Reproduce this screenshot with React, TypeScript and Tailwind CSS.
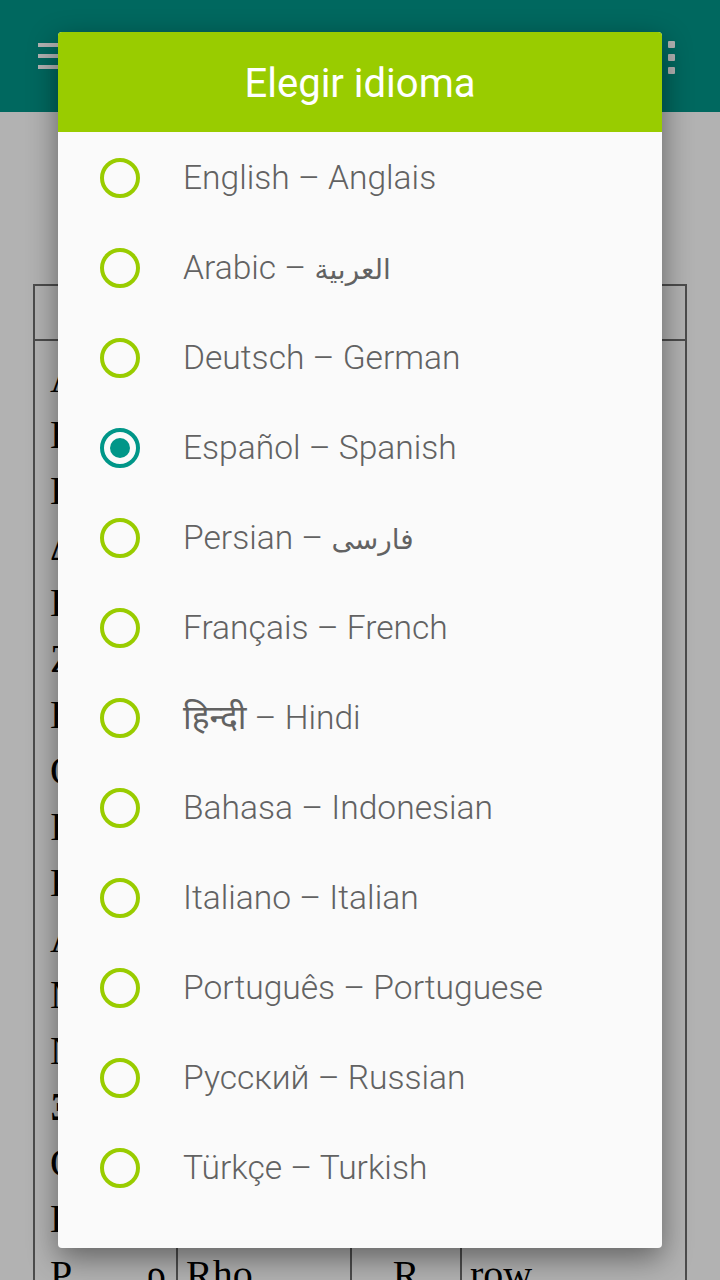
import React from "react";

type Lang = { pre: string; script?: string; post?: string; small?: boolean };

const languages: Lang[] = [
  { pre: "English – Anglais" },
  { pre: "Arabic – ", script: "العربية", small: true },
  { pre: "Deutsch – German" },
  { pre: "Español – Spanish" },
  { pre: "Persian – ", script: "فارسی", small: true },
  { pre: "Français – French" },
  { pre: "", script: "हिन्दी", post: " – Hindi" },
  { pre: "Bahasa – Indonesian" },
  { pre: "Italiano – Italian" },
  { pre: "Português – Portuguese" },
  { pre: "Русский – Russian" },
  { pre: "Türkçe – Turkish" },
];

const greek: [string, string, string, string, string][] = [
  ["Α", "α", "Alpha", "A", "al-fa"],
  ["Β", "β", "Beta", "B", "vee-ta"],
  ["Γ", "γ", "Gamma", "G", "gam-ma"],
  ["Δ", "δ", "Delta", "D", "del-ta"],
  ["Ε", "ε", "Epsilon", "E", "ep-si-lon"],
  ["Ζ", "ζ", "Zeta", "Z", "zee-ta"],
  ["Η", "η", "Eta", "H", "ee-ta"],
  ["Θ", "θ", "Theta", "Th", "thee-ta"],
  ["Ι", "ι", "Iota", "I", "yo-ta"],
  ["Κ", "κ", "Kappa", "K", "kap-pa"],
  ["Λ", "λ", "Lambda", "L", "lam-da"],
  ["Μ", "μ", "Mu", "M", "mee"],
  ["Ν", "ν", "Nu", "N", "nee"],
  ["Ξ", "ξ", "Xi", "X", "ksee"],
  ["Ο", "ο", "Omicron", "O", "o-mi-kron"],
  ["Π", "π", "Pi", "P", "pee"],
  ["Ρ", "ρ", "Rho", "R", "row"],
];

export default function App() {
  const selected = 3;
  return (
    <div
      className="relative w-[720px] h-[1280px] overflow-hidden bg-white"
      style={{ fontFamily: "Roboto, 'DejaVu Sans', 'Noto Sans', sans-serif" }}
    >
      {/* App bar */}
      <div className="h-[112px] bg-[#009688] flex items-start justify-between">
        <div className="ml-[38px] mt-[43px] flex flex-col gap-[7px]">
          <div className="w-[36px] h-[4px] bg-white" />
          <div className="w-[36px] h-[4px] bg-white" />
          <div className="w-[36px] h-[4px] bg-white" />
        </div>
        <div className="mr-[45px] mt-[41px] flex flex-col gap-[6px]">
          <div className="w-[7px] h-[7px] bg-white rounded-[1px]" />
          <div className="w-[7px] h-[7px] bg-white rounded-[1px]" />
          <div className="w-[7px] h-[7px] bg-white rounded-[1px]" />
        </div>
      </div>

      {/* Page content: table */}
      <div className="pt-[172px] px-[33px]">
        <div
          className="border-[2px] border-[#6e6e6e] w-[654px] text-black text-[40px]"
          style={{ fontFamily: "'Liberation Serif', 'DejaVu Serif', serif" }}
        >
          <div className="h-[55px] border-b-[2px] border-[#6e6e6e] flex">
            <div className="w-[143px] border-r-[2px] border-[#6e6e6e]" />
            <div className="w-[174px] border-r-[2px] border-[#6e6e6e]" />
            <div className="w-[110px] border-r-[2px] border-[#6e6e6e]" />
            <div className="flex-1" />
          </div>
          {greek.map((r, i) => (
            <div key={i} className="h-[56px] flex leading-[56px] whitespace-nowrap">
              <div className="w-[143px] border-r-[2px] border-[#6e6e6e] flex justify-between pl-[15px] pr-[10px] pt-[10px]">
                <span>{r[0]}</span>
                <span>{r[1]}</span>
              </div>
              <div className="w-[174px] border-r-[2px] border-[#6e6e6e] pl-[8px] pt-[10px]">{r[2]}</div>
              <div className="w-[110px] border-r-[2px] border-[#6e6e6e] text-center pt-[10px]">{r[3]}</div>
              <div className="flex-1 pl-[8px] pt-[10px]">{r[4]}</div>
            </div>
          ))}
        </div>
      </div>

      {/* Dim overlay */}
      <div className="absolute inset-0 bg-black/30" />

      {/* Dialog */}
      <div className="absolute left-[58px] top-[32px] w-[604px] h-[1216px] bg-[#fafafa] rounded-[4px] shadow-[0_10px_30px_rgba(0,0,0,0.45)] flex flex-col">
        <div className="h-[100px] bg-[#99cc00] rounded-t-[4px] flex items-center justify-center pt-[4px]">
          <span className="text-white text-[40px]">Elegir idioma</span>
        </div>
        <div className="flex flex-col">
          {languages.map((l, i) => (
            <div key={i} className="h-[90px] flex items-center pl-[42px] pt-[2px]">
              {i === selected ? (
                <div className="w-[40px] h-[40px] rounded-full border-[4px] border-[#009688] flex items-center justify-center shrink-0">
                  <div className="w-[20px] h-[20px] rounded-full bg-[#009688]" />
                </div>
              ) : (
                <div className="w-[40px] h-[40px] rounded-full border-[4px] border-[#99cc00] shrink-0" />
              )}
              <span className="ml-[43px] text-[33.6px] font-light text-[#626262] whitespace-pre">
                {l.pre}
                {l.script && (
                  <span className={l.small ? "text-[28px] font-normal" : "font-normal"}>{l.script}</span>
                )}
                {l.post}
              </span>
            </div>
          ))}
        </div>
      </div>
    </div>
  );
}
